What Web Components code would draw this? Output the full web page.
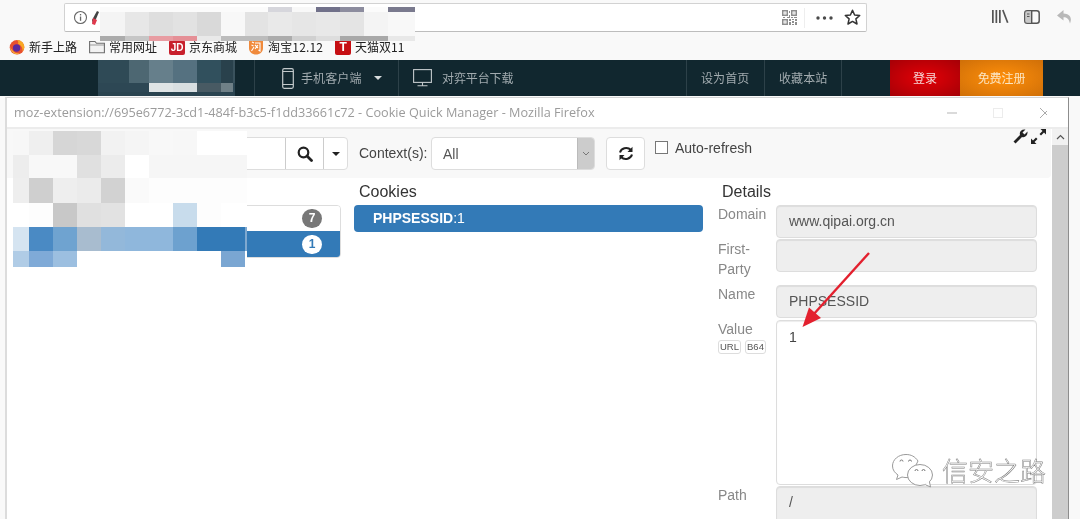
<!DOCTYPE html>
<html><head><meta charset="utf-8"><title>Cookie Quick Manager</title>
<style>
html,body{margin:0;padding:0;height:519px;overflow:hidden;background:#f9f9f9;font-family:"Liberation Sans","Noto Sans CJK SC",sans-serif}
body{position:relative;width:1080px;filter:blur(.3px)}
</style></head><body>
<browser-toolbar></browser-toolbar>
<bookmark-bar></bookmark-bar>
<site-nav></site-nav>
<popup-window></popup-window>

<mosaic-patch style="left:100px;top:7px" cols="25 24 24 24 24 24 23 24 24 24 24 24 27" rows="5 24 5"
 colors="#fbfbfb #fbfbfb #fbfbfb #fbfbfb #fbfbfb #fbfbfb #fbfbfb #d6d6dc #f8f8f8 #71718a #8c8c9e #fbfbfb #7a7a8e
 #f4f4f4 #e7e7e7 #dedede #e2e2e2 #d9d9d9 #f8f8f8 #e3e3e3 #e9e9e9 #e6e6e6 #e8e8e8 #e4e4e4 #f4f4f4 #f8f8f8
 #ababab #c6c6c6 #e89ca2 #e58f96 #e9e9e9 #bcbcbc #bcbcbc #acacac #d0d0d0 #dddddd #a8a8a8 #a8a8a8 #e8e8e8"></mosaic-patch>
<mosaic-patch style="left:98px;top:60px" cols="31 20 24 24 24 12 2" rows="23 9 4"
 colors="#2f4a56 #4d6772 #667f8b #557180 #31505d #29414c #3a525d
 #2d4754 #2d4754 #dfe4e5 #d9dfe1 #485a63 #6f8087 #2d4754
 #2a4450 #2a4450 #2a4450 #2a4450 #2a4450 #2a4450 #2a4450"></mosaic-patch>
<mosaic-patch style="left:7px;top:131px" cols="6 16 24 24 24 24 24 24 24 24 24 2" rows="24 23 25 24 24 16"
 colors="#f8f8f8 #f7f7f7 #efefef #d6d6d6 #d8d8d8 #f2f2f2 #f5f5f5 #f8f8f8 #f7f7f7 #ffffff #ffffff #ffffff
 #f8f8f8 #ededed #f8f8f8 #f8f8f8 #e0e0e0 #ececec #ffffff #f6f6f6 #f6f6f6 #f6f6f6 #f6f6f6 #f6f6f6
 #ffffff #eeeeee #cfcfcf #eeeeee #ebebeb #d2d2d2 #fafafa #fdfdfd #fdfdfd #fdfdfd #fdfdfd #fdfdfd
 #ffffff #ffffff #fdfdfd #c8c8c8 #e0e0e0 #e2e2e2 #ffffff #ffffff #c8dcec #fdfdfd #ffffff #ffffff
 #ffffff #d5e4f1 #4a8ac4 #6fa3d0 #a8bccf #93b8da #8fb7dc #8fb7dc #6da1cf #337ab7 #337ab7 #7fa9d0
 #ffffff #b0cce6 #7faad7 #9cbfe0 #ffffff #ffffff #ffffff #ffffff #ffffff #ffffff #7aa6d2 #ffffff"></mosaic-patch>
<red-arrow></red-arrow>
<wechat-mark>信安之路</wechat-mark>

<script>
function def(name, css, html, init){
  customElements.define(name, class extends HTMLElement{
    connectedCallback(){
      if(this.shadowRoot) return;
      const r=this.attachShadow({mode:'open'});
      r.innerHTML='<style>'+css+'</style>'+html;
      if(init) init.call(this,r);
    }
  });
}
const CJK='"Noto Sans CJK SC","Liberation Sans",sans-serif';
const AR='"Liberation Sans","Noto Sans CJK SC",sans-serif';

def('browser-toolbar',`
:host{display:flex;align-items:flex-start;height:38px;box-sizing:border-box;padding:3px 0 0 64px;background:#f9f9f9}
.url{width:803px;height:29px;box-sizing:border-box;background:#fff;border:1px solid #d2d2d2;border-bottom-color:#bdbdbd;border-radius:2px;display:flex;align-items:center;padding:0 5px 0 8px}
.sp{flex:1}
svg{display:block}
.sep{width:1px;height:20px;background:#eee;margin:0 11px 0 7px}
.tools{display:flex;align-items:center;margin-left:125px;padding-top:6px}
`,`
<div class="url">
 <svg width="15" height="15" viewBox="0 0 15 15"><circle cx="7.5" cy="7.5" r="6" fill="none" stroke="#666" stroke-width="1.1"/><rect x="6.9" y="6.5" width="1.3" height="4.3" fill="#666"/><rect x="6.9" y="4" width="1.3" height="1.4" fill="#666"/></svg>
 <svg style="margin-left:3px" width="10" height="18" viewBox="0 0 10 18"><path d="M2 15 L1 11 L6 2 L8 3 L5 10 Z" fill="#444"/><path d="M1 15 L2 9 L6 11 L4 16Z" fill="#e0394c"/></svg>
 <span class="sp"></span>
 <svg width="15" height="15" viewBox="0 0 15 15" fill="#8d8d8d"><path d="M0 0h6v6H0zM1.5 1.5v3h3v-3zM9 0h6v6H9zM10.5 1.5v3h3v-3zM0 9h6v6H0zM1.5 10.5v3h3v-3z" fill-rule="evenodd"/><path d="M2.5 2.5h1v1h-1zM11.500 2.500h1v1h-1zM2.500 11.500h1v1h-1zM7 1h1v2H7zM7 5h1v2H7zM1 7h2v1H1zM5 7h3v1H5zM9 7h2v1H9zM12 7h3v1h-3zM7 9h2v2H7zM10 9h2v1h-2zM13 9h2v2h-2zM7 12h2v3H7zM10 11h2v2h-2zM10 14h2v1h-2zM13 12h2v3h-2z"/></svg>
 <span class="sep"></span>
 <svg width="17" height="4" viewBox="0 0 17 4" fill="#4a4a4a"><circle cx="2" cy="2" r="1.7"/><circle cx="8.500" cy="2" r="1.700"/><circle cx="15" cy="2" r="1.700"/></svg>
 <svg style="margin-left:11px;margin-right:0" width="17" height="17" viewBox="0 0 17 17"><path d="M8.500 1.300 L10.600 6 L15.700 6.500 L11.900 9.900 L13 15 L8.500 12.400 L4 15 L5.100 9.900 L1.300 6.500 L6.400 6 Z" fill="none" stroke="#333" stroke-width="1.500" stroke-linejoin="round"/></svg>
</div>
<div class="tools">
 <svg width="17" height="15" viewBox="0 0 17 15" fill="#555"><rect x="0" y="1" width="1.700" height="13"/><rect x="3.500" y="1" width="1.700" height="13"/><rect x="7" y="1" width="1.700" height="13"/><path d="M10 1.300 L11.600 .8 L16.500 13.500 L14.900 14Z"/></svg>
 <svg style="margin-left:15px" width="16" height="14" viewBox="0 0 16 14"><rect x=".8" y=".8" width="14.400" height="12.400" rx="2.500" fill="none" stroke="#555" stroke-width="1.500"/><rect x="1.500" y="1.500" width="5.500" height="11" fill="#c9c9c9"/><rect x="7" y="1" width="1.400" height="12" fill="#555"/><path d="M3 4h2.500M3 6.500h2.500" stroke="#555"/></svg>
 <svg style="margin-left:17px" width="15" height="14" viewBox="0 0 15 14"><path d="M6.500 0 L0 5.500 L6.500 10.500 V7.300 C10 7.300 12 9 13 13.500 C15.500 7.500 12.500 3.700 6.500 3.500 Z" fill="#b8b8b8"/></svg>
</div>`);

def('bookmark-bar',`
:host{display:flex;align-items:center;height:22px;box-sizing:border-box;padding:0 0 4px 9px;background:#f9f9f9;font:12px/16px ${CJK};color:#222}
.b{display:flex;align-items:center;gap:4px}
svg{display:block;flex:none}
i{display:block;font-style:normal;font:bold 10px/15px ${AR};width:16px;height:15px;color:#fff;text-align:center;border-radius:2px}
`,`
<span class="b" style="margin-right:12px"><svg width="16" height="16" viewBox="0 0 16 16"><circle cx="8" cy="8.300" r="7.300" fill="#e8502f"/><path d="M8 1 C12 1 15.300 4 15.300 8.300 C15.300 10 14.500 11.500 13.500 12.500 C14 9 12 5.500 8.800 5 C10 3.700 9 2 8 1Z" fill="#f9a825"/><circle cx="7.600" cy="9" r="3.700" fill="#5b2a9e"/><path d="M1 7 C2 11 6 15 11 14.500 C7 16.500 1.500 14 1 7Z" fill="#f6b73c"/></svg>新手上路</span>
<span class="b" style="margin-right:12px"><svg width="16" height="14" viewBox="0 0 16 14"><path d="M.6 12.800V1.500H6L7.500 3.300H15.400V12.800Z" fill="#f2f2f2" stroke="#6e6e6e" stroke-width="1.100"/><path d="M1 5H15" stroke="#9a9a9a"/></svg>常用网址</span>
<span class="b" style="margin-right:11px"><i style="background:#c8202c">JD</i>京东商城</span>
<span class="b" style="margin-right:12px;gap:4px"><svg width="16" height="16" viewBox="0 0 16 16"><path d="M1 0H15V9C15 13 12 15.500 8 15.500C4 15.500 1 13 1 9Z" fill="#f08a3c"/><path d="M4 3L6 4M3.500 6L5.500 7M3.500 12L6 8M7 4H12V12L10.500 11M7 6L10 9M10 6L7 10" stroke="#fff" stroke-width="1.100" fill="none"/></svg><span style="letter-spacing:.15px">淘宝12.12</span></span>
<span class="b" style="gap:4px"><i style="background:#c60f13;font-size:12px;height:16px;line-height:16px">T</i>天猫双11</span>`);

def('site-nav',`
:host{display:flex;height:36px;background:#11272f;color:#a2abaf;font:12px/36px ${CJK};letter-spacing:.1px}
.c{display:flex;align-items:center;box-sizing:border-box;height:36px}
.d{border-left:1px solid #2d4149}
svg{display:block;flex:none}
`,`
<span class="c" style="width:254px"></span>
<span class="c d" style="width:144px;padding-left:27px"><svg width="12" height="21" viewBox="0 0 12 21" fill="none" stroke="#c3c9cb" stroke-width="1.200"><rect x=".7" y=".7" width="10.600" height="19.600" rx="1.500"/><path d="M.7 3.500H11.300M.7 16.500H11.300"/></svg><span style="margin-left:7px;width:62px">手机客户端</span><svg style="margin-left:11px" width="8" height="4" viewBox="0 0 8 4"><path d="M0 0H8L4 4Z" fill="#d8dcdd"/></svg></span>
<span class="c d" style="width:288px;padding-left:14px"><svg width="19" height="18" viewBox="0 0 19 18" fill="none" stroke="#c3c9cb" stroke-width="1.100"><rect x=".6" y=".6" width="17.800" height="12.800"/><path d="M9.500 13.500V16.500M4.500 16.800H14.500"/></svg><span style="margin-left:10px;letter-spacing:-.1px">对弈平台下载</span></span>
<span class="c d" style="width:78px;padding-left:14px">设为首页</span>
<span class="c d" style="width:77px;padding-left:14px">收藏本站</span>
<span class="c d" style="width:49px"></span>
<span class="c" style="width:70px;justify-content:center;color:#f4d8d8;background:radial-gradient(ellipse at center,#e40006 0,#a50006 100%)">登录</span>
<span class="c" style="width:83px;justify-content:center;color:#fbe6c4;letter-spacing:-.1px;background:radial-gradient(ellipse at center,#ff8f0a 0,#cf6f08 100%)">免费注册</span>`);

def('popup-window',`
:host{display:block;box-sizing:border-box;margin:1px 0 0 5px;width:1064px;height:422px;background:#fff;border:1px solid #d4d4d4;border-left:2px solid #dcdcdc;border-right:1px solid #8d8d8d;border-bottom:0;overflow:hidden}
.title{height:29px;display:flex;align-items:center;padding-left:7px;font:12.700px/29px "Open Sans",${AR};color:#9b9b9b;border-bottom:2px solid #ececec}
.ctl{margin-left:auto;display:flex;align-items:center}
.body{display:flex;height:390px}
.main{width:1045px;flex:none}
`,`
<div class="title"><span>moz-extension://695e6772-3cd1-484f-b3c5-f1dd33661c72 - Cookie Quick Manager - Mozilla Firefox</span>
 <span class="ctl"><svg width="100" height="12" viewBox="0 0 100 12" fill="none"><path d="M0 6H10" stroke="#b5b5b5"/><rect x="46.500" y="1.500" width="9" height="9" stroke="#ececec"/><path d="M93 1L103 11M103 1L93 11" stroke="#aaa"/></svg><span style="width:21px"></span></span>
</div>
<div class="body">
 <div class="main"><cqm-toolbar></cqm-toolbar><cqm-columns></cqm-columns></div>
 <window-scroll></window-scroll>
</div>`);

def('window-scroll',`
:host{display:flex;flex-direction:column;width:16px;margin-left:0;background:#f1f1f1}
.a{height:16px;display:flex;align-items:center;justify-content:center}
.t{flex:1;background:#cdcdcd}
`,`<div class="a"><svg width="9" height="6" viewBox="0 0 9 6"><path d="M1 5L4.500 1.500L8 5" fill="none" stroke="#555" stroke-width="1.200"/></svg></div><div class="t"></div>`);

def('cqm-toolbar',`
:host{display:flex;align-items:flex-start;box-sizing:border-box;height:49px;margin:0;padding:8px 0 0 12px;background:#f8f8f8;border-radius:0 0 4px 4px;font:14px/20px ${AR};color:#333;width:1044px;position:relative}
.g{display:flex;height:33px;box-sizing:border-box;border:1px solid #ddd;border-radius:4px;background:#fff}
.g>span{display:flex;align-items:center;justify-content:center;box-sizing:border-box;border-left:1px solid #ccc}
.ctx{margin-left:11px;line-height:33px;width:68px;color:#444}
.sel{margin-left:4px;width:164px;height:33px;box-sizing:border-box;border:1px solid #ddd;border-radius:4px;background:#fff;display:flex;align-items:center;justify-content:space-between;padding-left:11px;color:#555}
.sel b{width:16px;height:31px;background:#ccc;border-left:1px solid #bbb;display:flex;align-items:center;justify-content:center;border-radius:0 3px 3px 0}
.btn{margin-left:11px;width:39px;height:33px;box-sizing:border-box;border:1px solid #ddd;border-radius:4px;background:#fff;display:flex;align-items:center;justify-content:center}
.cb{margin-left:10px;margin-top:4px;width:13px;height:13px;box-sizing:border-box;border:1px solid #777;background:#fff}
.lb{margin-left:7px;margin-top:1px;color:#444}
.t{margin-left:auto;display:flex;gap:3px;margin-top:-8px;margin-right:5px}
svg{display:block}
`,`
<div class="g" style="width:329px"><i style="width:265px"></i>
 <span style="width:38px"><svg width="16" height="16" viewBox="0 0 16 16"><circle cx="6.500" cy="6.500" r="4.800" fill="none" stroke="#222" stroke-width="2.200"/><path d="M10 10L14.500 14.500" stroke="#222" stroke-width="2.800" stroke-linecap="round"/></svg></span>
 <span style="width:24px"><svg width="8" height="4" viewBox="0 0 8 4"><path d="M0 0H8L4 4Z" fill="#222"/></svg></span>
</div>
<span class="ctx">Context(s):</span>
<div class="sel">All<b><svg width="8" height="5" viewBox="0 0 8 5"><path d="M1 1L4 4L7 1" fill="none" stroke="#777"/></svg></b></div>
<div class="btn"><svg width="16" height="15" viewBox="0 0 16 15" fill="none" stroke="#222" stroke-width="2"><path d="M2 6.500C3 2.500 9 0 13 4"/><path d="M14 8.500C13 12.500 7 15 3 11"/><path d="M14.500 .8V6H9.500Z" fill="#222" stroke="none"/><path d="M1.500 14.200V9H6.500Z" fill="#222" stroke="none"/></svg></div>
<span class="cb"></span><span class="lb">Auto-refresh</span>
<span class="t"><svg width="15" height="15" viewBox="0 0 15 15"><path d="M.5 12.500L7 6C6 2.800 8.500 -.2 12.500 .5L9.500 3.500L11.500 5.500L14.500 2.500C15 6.500 12 9 9 8L2.500 14.500Z" fill="#222"/></svg><svg width="15" height="15" viewBox="0 0 15 15"><path d="M15 0V5.500L13 3.500L10 6.500L8.500 5L11.500 2L9.500 0ZM0 15V9.500L2 11.500L5 8.500L6.500 10L3.500 13L5.500 15Z" fill="#222"/></svg></span>`);

def('cqm-columns',`
:host{display:flex;font:14px/20px ${AR};color:#333}
h3{margin:0;font:16px/18px ${AR};color:#333;height:22px;padding-top:5px}
.left{width:333px;margin-left:12px;flex:none}
.lg{border:1px solid #ddd;border-radius:4px;overflow:hidden;width:322px;box-sizing:border-box}
.it{height:25px;display:flex;align-items:center;justify-content:flex-end;padding-right:18px;background:#fff}
.it.on{background:#337ab7;height:26px}
.bd{width:20px;height:19px;border-radius:10px;background:#777;color:#fff;font:bold 12px/19px ${AR};text-align:center}
.on .bd{background:#fff;color:#337ab7}
.mid{width:349px;margin-left:2px;flex:none}
.mid h3{padding-left:5px}
.cur{height:27px;background:#337ab7;border-radius:4px;color:#fff;padding-left:19px;line-height:26px}
.det{margin-left:15px;width:319px;flex:none}
.det h3{padding-left:4px}
`,`
<div class="left"><h3>&nbsp;</h3><div class="lg"><div class="it"><span class="bd">7</span></div><div class="it on"><span class="bd">1</span></div></div></div>
<div class="mid"><h3>Cookies</h3><div class="cur"><b>PHPSESSID</b>:1</div></div>
<div class="det"><h3>Details</h3><details-form></details-form></div>`);

def('details-form',`
:host{display:grid;grid-template-columns:58px 261px;font:14px/20px ${AR};color:#888}
.l{margin-top:-1px}
.f{box-sizing:border-box;border:1px solid #ddd;border-radius:4px;background:#eee;box-shadow:inset 0 1px 1px rgba(0,0,0,.075);color:#555;padding:0 12px;line-height:31px;height:33px}
.ta{background:#fff;height:165px;line-height:20px;padding:6px 12px;color:#444}
.tags{display:flex;gap:4px;margin-top:1px}
.tags span{font:9.500px/12px ${AR};color:#555;border:1px solid #ddd;border-radius:3px;padding:0 1px;background:#fff;height:12px}
`,`
<div class="l">Domain</div><div class="f" style="margin-bottom:1px">www.qipai.org.cn</div>
<div class="l" style="margin-top:0">First-<br>Party</div><div class="f" style="margin-bottom:13px"></div>
<div class="l">Name</div><div class="f" style="margin-bottom:2px">PHPSESSID</div>
<div class="l" style="margin-top:-1px;padding-top:0">Value<div class="tags"><span>URL</span><span>B64</span></div></div><div class="f ta" style="margin-bottom:1px">1</div>
<div class="l">Path</div><div class="f" style="height:40px">/</div>`);

customElements.define('mosaic-patch', class extends HTMLElement{
  connectedCallback(){
    if(this.shadowRoot) return;
    const r=this.attachShadow({mode:'open'});
    const cols=this.getAttribute('cols').trim().split(/\s+/), rows=this.getAttribute('rows').trim().split(/\s+/);
    const c=this.getAttribute('colors').trim().split(/\s+/);
    r.innerHTML='<style>:host{position:absolute;display:grid;grid-template-columns:'+cols.map(v=>v+'px').join(' ')+';grid-template-rows:'+rows.map(v=>v+'px').join(' ')+'}</style>'+c.map(x=>'<div style="background:'+x+'"></div>').join('');
  }
});

def('red-arrow',`:host{position:absolute;left:795px;top:245px;width:85px;height:90px}svg{display:block}`,
`<svg width="85" height="90" viewBox="0 0 85 90"><path d="M74 8L18 70" stroke="#e3202e" stroke-width="2.400" fill="none"/><path d="M7.500 82L14 62.500L26 73Z" fill="#e3202e"/></svg>`);

def('wechat-mark',`
:host{position:absolute;left:890px;top:451px;display:flex;align-items:center;font:300 26px/36px ${CJK};color:#fff;-webkit-text-stroke:.5px #7d7d7d}
svg{display:block;flex:none;margin-right:8px}
`,`<svg width="44" height="38" viewBox="0 0 44 38" fill="#fff" stroke="#9a9a9a"><path d="M16 3.500C8.500 3.500 2.500 8.500 2.500 15C2.500 19 5 22 8 24L6.500 28.500L12 26C14 26.500 18 27 20 26L28 10C25 5.500 21 3.500 16 3.500Z"/><ellipse cx="30" cy="24" rx="12.500" ry="10.500"/><path d="M35 33L40 36L39 30" stroke="none"/><path d="M35.500 33.800L40.500 36L39.500 31"/><path d="M10 10.500a1.500 1.500 0 0 1 3 0M18.500 10.500a1.500 1.500 0 0 1 3 0M25 20a1.500 1.500 0 0 1 3 0M32 20a1.500 1.500 0 0 1 3 0" fill="none" stroke="#777"/></svg><slot></slot>`);
</script>
</body></html>
